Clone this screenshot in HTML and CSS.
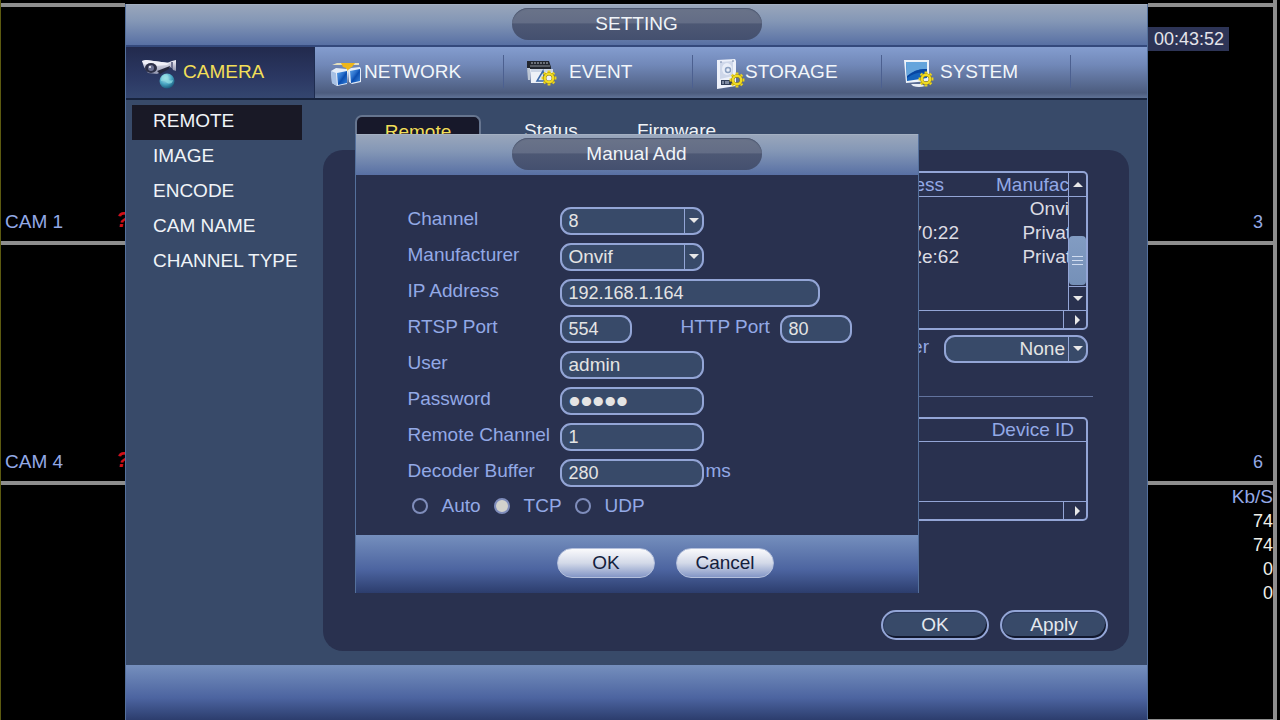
FILE: index.html
```html
<!DOCTYPE html>
<html lang="en">
<head>
<meta charset="utf-8">
<title>Setting</title>
<link rel="stylesheet" href="styles.css">
</head>
<body>
<svg class="defs" aria-hidden="true">
  <defs>
    <linearGradient id="screen" x1="0" y1="0" x2="1" y2="1"><stop offset="0" stop-color="#5aa0e6"/><stop offset=".4" stop-color="#2a70cc"/><stop offset=".55" stop-color="#0b4eb0"/><stop offset="1" stop-color="#3a86dc"/></linearGradient>
    <linearGradient id="metal" x1="0" y1="0" x2="0" y2="1"><stop offset="0" stop-color="#f2f2fa"/><stop offset="1" stop-color="#8f93ad"/></linearGradient>
    <radialGradient id="globe" cx=".4" cy=".3" r=".8"><stop offset="0" stop-color="#c4f0f4"/><stop offset=".5" stop-color="#4aa8c4"/><stop offset="1" stop-color="#0c4568"/></radialGradient>
    <g id="gear">
      <g stroke="#e8d21e" stroke-width="2.8"><path d="M0-7.4V-4M0 7.4V4M-7.4 0H-4M7.4 0H4M-5.2-5.2l2.4 2.4M5.2 5.2L2.8 2.8M-5.2 5.2l2.4-2.4M5.2-5.2L2.8-2.8"/></g>
      <circle r="4.2" fill="none" stroke="#8c7410" stroke-width="3.2"/>
      <circle r="4.2" fill="none" stroke="#f0dc22" stroke-width="2.4"/>
    </g>
  </defs>
</svg>
<div class="desktop">
  <div class="cams cams-left">
    <div class="cam"><span class="cam-name">CAM 1</span><span class="alert">?</span></div>
    <div class="cam"><span class="cam-name">CAM 4</span><span class="alert">?</span></div>
    <div class="cam"></div>
  </div>

  <main class="window">
    <header class="titlebar"><h1 class="pill">SETTING</h1></header>
    <nav class="nav">
      <a href="#camera" class="nav-item active">
        <svg class="icon" width="41" height="36" viewBox="0 0 41 36" aria-hidden="true">
          <path d="M25 6l5-2 4-1v11l-3-1-1-3-5 1z" fill="url(#metal)"/>
          <path d="M29 5h2v6h-2z" fill="#6d7190"/>
          <path d="M0 4l4-1 23 3v5l-12 6-9-1-4-6z" fill="url(#metal)"/>
          <path d="M0 4l4-1 23 3-2 2-13 1-10-2z" fill="#f0f0f8"/>
          <path d="M15 14l13-5-1 3-9 5z" fill="#24273c"/>
          <ellipse cx="9" cy="11" rx="6" ry="5" fill="#2c2f46"/><circle cx="9" cy="11" r="3" fill="#6e7394"/><circle cx="8" cy="10" r="1" fill="#fff"/>
          <circle cx="25" cy="24" r="7.500" fill="url(#globe)"/>
          <path d="M20 19q6-4 6 1t5 3q-1 5-6 3-2-3-6-2z" fill="#8ddbe0" opacity=".75"/>
        </svg>CAMERA</a>
      <a href="#network" class="nav-item">
        <svg class="icon" width="33" height="36" viewBox="0 0 33 36" aria-hidden="true">
          <path d="M1 8l5-2h22v2z" fill="#e6e0bc"/><path d="M10 6h14l-3 4-2 1v4h-4v-4l-3-1z" fill="#eeb61a"/>
          <path d="M0 14l5-3 11 1 1 3-1 12-10 2-5-3z" fill="#e4edf9"/><path d="M0 14l5 2 1 13-5-3z" fill="#a6c0e4"/><path d="M6 16l10-2v12l-9 2z" fill="url(#screen)"/>
          <path d="M17 13l3-2 9-1 1 2v13l-9 2-3-2z" fill="#e4edf9"/><path d="M19 14l10-2v12l-9 2z" fill="url(#screen)"/>
        </svg>NETWORK</a>
      <a href="#event" class="nav-item">
        <svg class="icon" width="49" height="36" viewBox="0 0 49 36" aria-hidden="true">
          <path d="M7 4h22l2 6v3H7z" fill="#22262e"/><path d="M11 6h17" stroke="#b4bac4" stroke-dasharray="2 1"/><path d="M10 9h20" stroke="#8a9098"/>
          <path d="M7 11h3v12H8z" fill="#bcc6d4"/><path d="M10 12h23v14H11z" fill="#edf1f7"/><path d="M11 12h22v3H11z" fill="#ccd6e6"/>
          <path d="M23 14l-6 10h8z" fill="#dce6f4" stroke="#3b69a8" stroke-width="1.500"/>
          <use href="#gear" transform="translate(29 21)"/>
        </svg>EVENT</a>
      <a href="#storage" class="nav-item">
        <svg class="icon" width="36" height="36" viewBox="0 0 36 36" aria-hidden="true">
          <path d="M8 3l18-1 1 2v25l-19 3z" fill="#edf1fa"/><path d="M11 5l13-1v15l-13 3z" fill="#ced7e9"/>
          <ellipse cx="18" cy="12" rx="5" ry="6" fill="#e9eef8"/><circle cx="19" cy="13" r="2.500" fill="none" stroke="#8ba0c0" stroke-width="1.500"/>
          <path d="M12 23h12v5H12z" fill="#303e58"/><path d="M14 24v3M17 24v3M19 24v3" stroke="#cbd5e8"/><path d="M11 5h2M23 4h2" stroke="#7488aa"/>
          <use href="#gear" transform="translate(28 23)"/>
        </svg>STORAGE</a>
      <a href="#system" class="nav-item">
        <svg class="icon" width="42" height="36" viewBox="0 0 42 36" aria-hidden="true">
          <path d="M6 3h25v21l-23 2z" fill="#edf3fa"/><path d="M8 5h21v16L9 24z" fill="#1462bc"/>
          <path d="M8 5h21v7q-11-1-20 8z" fill="#65a5dc"/><path d="M9 19q9-8 20-7v4q-10-2-20 5z" fill="#0846a2"/>
          <path d="M13 27h10l4 2q-6 2-12 0z" fill="#e7edf4"/>
          <use href="#gear" transform="translate(28 22)"/>
        </svg>SYSTEM</a>
    </nav>

    <div class="content">
      <aside class="sidebar">
        <a href="#remote" class="side-item active">REMOTE</a>
        <a href="#image" class="side-item">IMAGE</a>
        <a href="#encode" class="side-item">ENCODE</a>
        <a href="#cam-name" class="side-item">CAM NAME</a>
        <a href="#channel-type" class="side-item">CHANNEL TYPE</a>
      </aside>
      <section class="main">
        <div class="tabs">
          <button type="button" class="tab active">Remote</button>
          <button type="button" class="tab">Status</button>
          <button type="button" class="tab">Firmware</button>
        </div>
        <div class="panel">
          <div class="list">
            <div class="list-view">
              <div class="list-clip">
                <table class="devices">
                  <thead><tr><th class="addr">Address</th><th class="maker">Manufacturer</th></tr></thead>
                  <tbody>
                    <tr><td class="addr"></td><td class="maker">Onvif</td></tr>
                    <tr><td class="addr">70:22</td><td class="maker">Private</td></tr>
                    <tr><td class="addr">2e:62</td><td class="maker">Private</td></tr>
                  </tbody>
                </table>
              </div>
              <div class="vbar">
                <span class="vbar-end up"><i class="tri tri-up"></i></span>
                <span class="thumb"><i></i><i></i><i></i></span>
                <span class="vbar-end down"><i class="tri tri-down"></i></span>
              </div>
            </div>
            <div class="hbar"><span><i class="tri tri-right"></i></span></div>
          </div>
          <div class="filter-row">
            <label for="filter">Filter</label>
            <span class="select"><select id="filter" class="field right"><option>None</option></select><i class="tri tri-down"></i></span>
          </div>
          <hr class="rule">
          <div class="list added">
            <table class="devices added-table">
              <thead><tr><th class="device-id">Device ID</th></tr></thead>
            </table>
            <div class="hbar"><span><i class="tri tri-right"></i></span></div>
          </div>
          <div class="actions">
            <button type="button" class="btn">OK</button>
            <button type="button" class="btn">Apply</button>
          </div>
        </div>
      </section>
    </div>
    <footer class="footer"></footer>

    <form class="dialog" role="dialog" aria-labelledby="dialog-title">
      <header class="titlebar"><h2 class="pill" id="dialog-title">Manual Add</h2></header>
      <div class="form">
        <div class="row"><label for="channel">Channel</label><span class="select"><select id="channel" class="field num"><option>8</option></select><i class="tri tri-down"></i></span></div>
        <div class="row"><label for="maker">Manufacturer</label><span class="select"><select id="maker" class="field"><option>Onvif</option></select><i class="tri tri-down"></i></span></div>
        <div class="row"><label for="ip">IP Address</label><input id="ip" class="field num wide" value="192.168.1.164"></div>
        <div class="row"><label for="rtsp">RTSP Port</label><input id="rtsp" class="field num short" value="554"><label for="http" class="second">HTTP Port</label><input id="http" class="field num short" value="80"></div>
        <div class="row"><label for="user">User</label><input id="user" class="field" value="admin"></div>
        <div class="row"><label for="pass">Password</label><input id="pass" type="password" class="field secret" value="admin"></div>
        <div class="row"><label for="rch">Remote Channel</label><input id="rch" class="field num" value="1"></div>
        <div class="row"><label for="buffer">Decoder Buffer</label><input id="buffer" class="field num" value="280"><span class="unit">ms</span></div>
        <div class="radios">
          <label><input type="radio" name="proto">Auto</label>
          <label><input type="radio" name="proto" checked>TCP</label>
          <label><input type="radio" name="proto">UDP</label>
        </div>
      </div>
      <div class="dialog-footer">
        <button type="button" class="btn-light">OK</button>
        <button type="button" class="btn-light">Cancel</button>
      </div>
    </form>
  </main>

  <div class="cams cams-right">
    <div class="cam"><time class="clock">00:43:52</time><span class="cam-name">3</span></div>
    <div class="cam"><span class="cam-name">6</span></div>
    <div class="cam rates"><span class="rate-head">Kb/S</span><span>74</span><span>74</span><span>0</span><span>0</span></div>
  </div>
</div>
</body>
</html>
```

FILE: styles.css
```css
* { box-sizing: border-box; }
body {
  margin: 0;
  background: #000;
  color: #e4e8ee;
  font: 19px/24px "Liberation Sans", Arial, sans-serif;
}
button, input, select { font: inherit; color: inherit; }
a { color: inherit; text-decoration: none; }
.defs { position: absolute; width: 0; height: 0; }

.desktop {
  display: grid;
  grid-template-columns: 125px minmax(0, 1fr) 132px;
  min-height: 100vh;
}

/* Live view behind the settings window */
.cams {
  display: grid;
  grid-template-rows: 238px 240px 1fr;
  padding-top: 3px;
  min-width: 0;
}
.cams-left { border-left: 1px solid #5c5a10; overflow: hidden; }
.cam {
  display: flex;
  align-items: flex-end;
  border-top: 4px solid #8e8e8e;
  padding-bottom: 7px;
  font-size: 18px;
  color: #93a9e6;
}
.cams-left .cam { justify-content: space-between; padding-left: 4px; font-size: 19px; }
.cam .alert {
  width: 9px;
  padding-bottom: 2px;
  color: #d01018;
  font-size: 22px;
  font-weight: bold;
  font-style: italic;
}
.cams-right { margin-right: 3px; border-right: 4px solid #8e8e8e; }
.cams-right .cam {
  flex-direction: column;
  justify-content: space-between;
  align-items: flex-end;
}
.cams-right .cam-name { margin-top: auto; padding-right: 10px; }
.clock {
  align-self: flex-start;
  margin-top: 20px;
  padding: 0 5px 0 6px;
  background: #2d3456;
  color: #e4e4ea;
}
.cams-right .rates {
  justify-content: flex-start;
  color: #f0f0ea;
  border-bottom: 1px solid #8e8e8e;
}
.rate-head { color: #93a9e6; font-size: 19px; }

/* Settings window */
.window {
  position: relative;
  display: flex;
  flex-direction: column;
  margin-top: 4px;
  border: 1px solid #54709c;
  border-width: 0 1px;
  background: #384a69;
}
.titlebar {
  display: flex;
  justify-content: center;
  align-items: flex-start;
  height: 41px;
  padding-top: 3px;
  border-top: 1px solid #a4b0c2;
  background: linear-gradient(#99a6bb, #8497b6 40%, #5870a4);
}
.pill {
  width: 250px;
  height: 32px;
  margin: 0;
  border-radius: 16px;
  box-shadow: inset 0 1px 1px #4b566f;
  background: linear-gradient(#6a7389, #636d86 46%, #4d5874 50%, #44506f);
  color: #f0f4f8;
  font-size: 19px;
  font-weight: normal;
  line-height: 31px;
  text-align: center;
}
.nav {
  display: flex;
  height: 55px;
  border-top: 2px solid #34497c;
  border-bottom: 2px solid #17233d;
  background: linear-gradient(#849dcf, #7188b8 35%, #4c5c7e 90%, #5f7296);
}
.nav-item {
  position: relative;
  display: flex;
  align-items: center;
  width: 189px;
  padding: 0 0 2px 16px;
  color: #f2f6fa;
}
.nav-item:not(.active)::after {
  content: "";
  position: absolute;
  right: 0;
  width: 1px;
  height: 33px;
  background: #4c6090;
}
.nav-item.active {
  background: linear-gradient(#222a4d, #2b3863 60%, #34466f);
  border-right: 1px solid #1e2c50;
  color: #f2df58;
}
.icon { flex: none; margin-top: 6px; }

.content {
  flex: 1;
  display: grid;
  grid-template-columns: 176px minmax(0, 1fr);
  padding: 5px 18px 14px 6px;
}
.side-item {
  display: block;
  width: 170px;
  padding-left: 21px;
  line-height: 32px;
  height: 35px;
  color: #f0f4f8;
  white-space: nowrap;
}
.side-item.active { background: #191926; }
.main { display: flex; flex-direction: column; padding: 10px 0 0 15px; }
.tabs { display: flex; padding-left: 32px; height: 35px; }
.tab {
  border: 0;
  padding: 0 16px 4px 43px;
  background: none;
  color: #f0f4f8;
}
.tab.active {
  width: 126px;
  padding: 0 0 4px;
  border: 2px solid #66758f;
  border-bottom: 0;
  border-radius: 7px 7px 0 0;
  background: #17182a;
  color: #f2df58;
}
.panel {
  flex: 1;
  display: flex;
  flex-direction: column;
  padding: 21px 21px 11px 32px;
  border-radius: 20px;
  background: #29314f;
}

/* Lists */
.list {
  margin-right: 20px;
  border: 2px solid #93a5d6;
  border-radius: 5px;
  overflow: hidden;
}
.list-view { display: grid; grid-template-columns: minmax(0, 1fr) 18px; height: 137px; }
.list-clip {
  overflow: hidden;
  background: linear-gradient(#93a5d6, #93a5d6) 0 23px / 100% 1px no-repeat;
}
.devices { width: calc(100% + 77px); border-collapse: collapse; table-layout: fixed; }
.devices th, .devices td { height: 24px; padding: 0; font-weight: normal; }
.devices th { color: #93a9e6; }
.devices .addr { text-align: right; }
.devices th.addr { padding-right: 15px; }
.devices .maker { width: 186px; text-align: center; }
.devices td { color: #dcdce4; }
.vbar { display: flex; flex-direction: column; border-left: 1px solid #93a5d6; }
.vbar-end { display: grid; place-items: center; height: 24px; }
.vbar .up { border-bottom: 1px solid #93a5d6; }
.vbar .down { border-top: 1px solid #93a5d6; margin-top: 1px; }
.thumb {
  display: grid;
  place-content: center;
  gap: 3px;
  height: 49px;
  margin-top: auto;
  border-radius: 4px;
  background: linear-gradient(#829cc2, #7590b8);
}
.thumb i { width: 11px; height: 1px; background: #d0dcf0; }
.hbar {
  display: flex;
  justify-content: flex-end;
  height: 18px;
  border-top: 1px solid #93a5d6;
}
.hbar span { display: grid; place-items: center; width: 23px; border-left: 1px solid #93a5d6; padding-left: 4px; }
.tri { width: 0; height: 0; border: 5px solid transparent; }
.tri-up { border-top: 0; border-bottom-color: #e8e8e8; }
.tri-down { border-bottom: 0; border-top-color: #e8e8e8; }
.tri-right { border-right: 0; border-left-color: #e8e8e8; }

.filter-row {
  display: flex;
  justify-content: flex-end;
  gap: 15px;
  margin: 5px 20px 0 0;
}
.filter-row label { color: #93a9e6; }
.rule { width: calc(100% - 15px); height: 1px; margin: 33px 0 20px; border: 0; background: #62739e; }
.devices.added-table { width: 100%; border-bottom: 1px solid #93a5d6; }
.devices .device-id { height: 22px; padding-right: 12px; line-height: 22px; text-align: right; }
.added .hbar { margin-top: 59px; }
.actions { display: flex; justify-content: flex-end; gap: 11px; margin-top: auto; }
.btn {
  width: 108px;
  height: 30px;
  padding: 0;
  border: 2px solid #93a5d6;
  border-radius: 15px;
  background: #384a69;
  box-shadow: inset -1px -2px 0 #11182e, inset 1px 1px 0 #29375a;
  line-height: 26px;
}
.footer { height: 55px; background: linear-gradient(#758fbd, #4c64a0 60%, #2c3d6d); }

/* Fields */
.select { position: relative; display: inline-flex; }
.field {
  width: 144px;
  height: 28px;
  padding: 0 8px 0 7px;
  border: 2px solid #93a5d6;
  border-radius: 11px;
  outline: 0;
  background: #384a69;
  color: #e4e4e4;
  line-height: 24px;
}
select.field {
  appearance: none;
  background: linear-gradient(#93a5d6, #93a5d6) right 17px top 0 / 1px 100% no-repeat #384a69;
}
select.right { text-align-last: right; padding-right: 21px; }
.select .tri { position: absolute; right: 5px; top: 11px; pointer-events: none; }
.num { font-size: 18px; }
.wide { width: 260px; }
.short { width: 72px; }
.secret { font-size: 34px; }

/* Manual add dialog */
.dialog {
  position: absolute;
  top: 130px;
  left: 0;
  right: 0;
  width: 564px;
  margin: 0 auto;
  border: 1px solid #54709c;
  border-width: 0 1px;
  background: #29314f;
}
.form { padding: 32px 0 18px 52px; color: #93a9e6; }
.row { display: flex; align-items: flex-start; height: 36px; }
.row > label { width: 152px; white-space: nowrap; }
.row > .second { width: 99px; margin-left: 49px; }
.unit { margin-left: 2px; }
.radios { display: flex; gap: 13px; height: 22px; padding-left: 4px; }
.radios label { display: flex; align-items: center; gap: 14px; }
.radios input {
  appearance: none;
  width: 16px;
  height: 16px;
  margin: 0;
  border: 2px solid #7f8dbb;
  border-radius: 8px;
}
.radios input:checked { background: #d2d2cc; }
.dialog-footer {
  display: flex;
  justify-content: center;
  gap: 21px;
  height: 58px;
  padding: 13px 0 0 58px;
  background: linear-gradient(#758fbd, #4c64a0 60%, #2c3d6d);
}
.btn-light {
  width: 98px;
  height: 30px;
  padding: 0;
  border: 1px solid #b4c0dc;
  border-radius: 15px;
  background: linear-gradient(#fafafc, #d3d9e8 50%, #8396c6);
  color: #14203c;
  line-height: 26px;
}
```
